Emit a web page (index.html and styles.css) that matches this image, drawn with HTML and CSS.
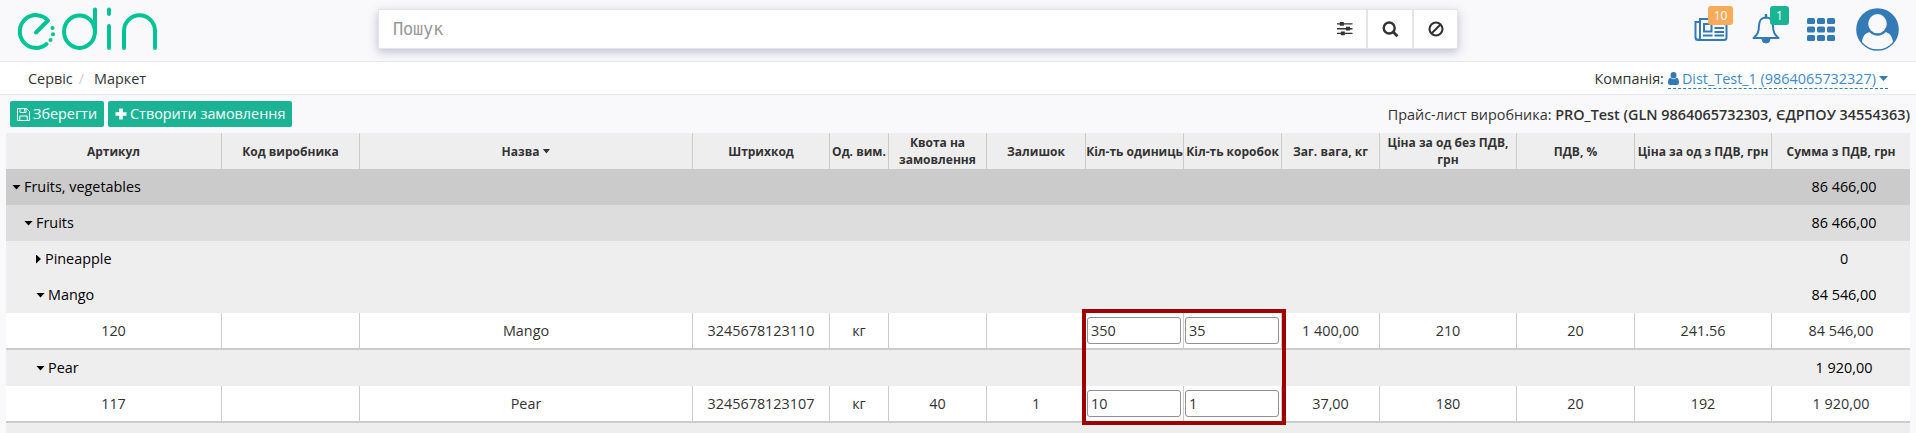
FILE: index.html
```html
<!DOCTYPE html>
<html lang="uk">
<head>
<meta charset="utf-8">
<title>Маркет</title>
<link rel="stylesheet" href="styles.css">
</head>
<body>
<header class="topbar">
  <svg class="logo" width="160" height="52" viewBox="0 0 160 52" role="img" aria-label="edin">
    <g fill="none" stroke="#00c496" stroke-width="4" stroke-linecap="round" stroke-linejoin="round">
      <path d="M35 32.500 47 20.500A16.200 16.400 0 1 0 45.500 44"/>
      <ellipse cx="78.500" cy="31.700" rx="15.400" ry="16.300"/>
      <path d="M94 9.500V32M108 9.500V14M108 26V48M123 48V31a15.500 15.700 0 0 1 31 0V48"/>
    </g>
    <g fill="#00c496"><circle cx="51.500" cy="28" r="2"/><circle cx="52" cy="34.300" r="2"/><circle cx="49.500" cy="40" r="2"/></g>
  </svg>
  <div class="search">
    <div class="search-input">Пошук</div>
    <div class="search-btn filter"><svg width="16" height="14" viewBox="0 0 16 14" fill="#333"><path d="M0 1.2h15.500v1.400H0zM0 6h15.500v1.400H0zM0 10.700h15.500v1.400H0zM2.800 0h4v3.800h-4zM9 4.800h4v3.800H9zM3.800 9.500h4v3.800h-4z"/></svg></div>
    <div class="search-btn"><svg width="17" height="17" viewBox="0 0 17 17" fill="none" stroke="#333" stroke-width="2.400"><circle cx="7.200" cy="7" r="5.500"/><path d="M11.200 11 15.500 15.300" stroke-width="2.800"/></svg></div>
    <div class="search-btn"><svg width="16" height="16" viewBox="0 0 16 16" fill="none" stroke="#333" stroke-width="2.100"><circle cx="8" cy="8" r="6.500"/><path d="M3.500 12.500 12.500 3.500"/></svg></div>
  </div>
  <div class="tools">
    <div class="tool news"><svg width="34" height="24" viewBox="0 0 34 24" fill="none" stroke="#337ab7" stroke-width="2"><path d="M5 4H1.500V19.500a2.500 2.500 0 0 0 2.500 2.500H30a2.500 2.500 0 0 0 2.500-2.500V1H6V19.500a2 2 0 0 1-4 .5"/><path d="M10 6h7.500v7.500H10zM20.500 6H30M20.500 10H30M20.500 14H30M9 17.500h9.500M20.500 17.500H30"/></svg><span class="badge orange">10</span></div>
    <div class="tool bell"><svg width="28" height="30" viewBox="0 0 28 30" fill="none" stroke="#337ab7" stroke-width="2"><path d="M14 3.500c-5 0-7 4-7 8 0 7-2 9.500-5.500 12.500h25c-3.500-3-5.500-5.500-5.500-12.500 0-4-2-8-7-8z" stroke-linejoin="round"/><path d="M14 3.500V1" stroke-width="2.500" stroke-linecap="round"/><path d="M10 25a4 4 0 0 0 8 0z" fill="#337ab7" stroke-width="1"/></svg><span class="badge green">1</span></div>
    <svg class="grid-icon" width="28" height="23" viewBox="0 0 28 23" fill="#337ab7"><rect width="8" height="6" rx="1.500"/><rect x="10" width="8" height="6" rx="1.500"/><rect x="20" width="8" height="6" rx="1.500"/><rect y="8.500" width="8" height="6" rx="1.500"/><rect x="10" y="8.500" width="8" height="6" rx="1.500"/><rect x="20" y="8.500" width="8" height="6" rx="1.500"/><rect y="17" width="8" height="6" rx="1.500"/><rect x="10" y="17" width="8" height="6" rx="1.500"/><rect x="20" y="17" width="8" height="6" rx="1.500"/></svg>
    <svg class="avatar" width="43" height="43" viewBox="0 0 43 43"><circle cx="21.500" cy="21.500" r="21.300" fill="#337ab7"/><path d="M6 34C6.800 28 9.500 25 13.500 24.300a11 11 0 0 0 16 0C33.500 25 36.200 28 37 34a20 20 0 0 1-31 0z" fill="#f9f9fb"/><ellipse cx="21.500" cy="15.700" rx="9.300" ry="9.600" fill="#f9f9fb"/></svg>
  </div>
</header>
<nav class="crumbs">
  <div><span>Сервіс</span><span class="slash">/</span><span>Маркет</span></div>
  <div class="company">Компанія: <a class="company-link"><svg width="11" height="13" viewBox="0 0 11 13" fill="#337ab7"><ellipse cx="5.500" cy="3.300" rx="3" ry="3.300"/><path d="M2.500 5.800C.7 6.300 0 8 0 10.500 0 12 1 13 2.300 13h6.400c1.300 0 2.300-1 2.300-2.500 0-2.500-.7-4.200-2.500-4.700a4 4 0 0 1-6 0z"/></svg><span class="company-name">Dist_Test_1 (9864065732327)</span><i class="caret"></i></a></div>
</nav>
<main>
  <div class="actions">
    <button class="btn"><svg width="13" height="13" viewBox="0 0 13 13" fill="none" stroke="#fff"><path d="M.5.500h9l3 3v9H.5zM3 .5v4h6v-4M2.800 12.500v-4.500h7.400v4.500M7.500 1v2.500"/></svg><span>Зберегти</span></button>
    <button class="btn"><svg width="12" height="12" viewBox="0 0 12 12" fill="#fff"><path d="M4.200.5h3.600v3.700H11.500v3.600H7.800v3.700H4.200V7.800H.5V4.200h3.700z"/></svg><span>Створити замовлення</span></button>
    <div class="pricelist">Прайс-лист виробника: <b>PRO_Test (GLN 9864065732303, ЄДРПОУ 34554363)</b></div>
  </div>
  <div class="sheet">
    <div class="row head"><div>Артикул</div><div>Код виробника</div><div>Назва<i class="caret"></i></div><div>Штрихкод</div><div>Од. вим.</div><div>Квота на замовлення</div><div>Залишок</div><div>Кіл-ть одиниць</div><div>Кіл-ть коробок</div><div>Заг. вага, кг</div><div>Ціна за од без ПДВ, грн</div><div>ПДВ, %</div><div>Ціна за од з ПДВ, грн</div><div>Сумма з ПДВ, грн</div></div>
    <div class="group g1"><i class="caret"></i><span>Fruits, vegetables</span><span class="sum">86 466,00</span></div>
    <div class="group g2"><i class="caret"></i><span>Fruits</span><span class="sum">86 466,00</span></div>
    <div class="group g3"><i class="caret closed"></i><span>Pineapple</span><span class="sum">0</span></div>
    <div class="group g3"><i class="caret"></i><span>Mango</span><span class="sum">84 546,00</span></div>
    <div class="row item"><div>120</div><div></div><div>Mango</div><div>3245678123110</div><div>кг</div><div></div><div></div><div class="edit"><input value="350"></div><div class="edit"><input value="35"></div><div>1 400,00</div><div>210</div><div>20</div><div>241.56</div><div>84 546,00</div></div>
    <div class="group g3"><i class="caret"></i><span>Pear</span><span class="sum">1 920,00</span></div>
    <div class="row item"><div>117</div><div></div><div>Pear</div><div>3245678123107</div><div>кг</div><div>40</div><div>1</div><div class="edit"><input value="10"></div><div class="edit"><input value="1"></div><div>37,00</div><div>180</div><div>20</div><div>192</div><div>1 920,00</div></div>
    <div class="group g3 last"></div>
    <div class="highlight"></div>
  </div>
</main>
</body>
</html>
```

FILE: styles.css
```css
* { box-sizing: border-box; }
body {
  margin: 0;
  background: #f9f9fb;
  color: #333;
  font: 14.4px/20px "Open Sans", "Noto Sans", sans-serif;
}
svg { display: block; flex: none; }
.topbar {
  display: flex;
  align-items: flex-start;
  height: 62px;
  padding-left: 1px;
  border-bottom: 1px solid #e7e7ee;
}
.logo { margin-right: 217px; }
.search {
  display: flex;
  width: 1080px;
  height: 40px;
  margin-top: 9px;
  padding: 1px;
  background: #e5e5e8;
  box-shadow: 0 3px 9px rgba(80, 80, 130, .35);
}
.search-input {
  flex: 1;
  padding: 8px 14px;
  background: #fff;
  color: #999;
  font: 17px/22px "DejaVu Sans Mono", monospace;
  letter-spacing: -.2px;
}
.search-btn {
  display: flex;
  align-items: center;
  justify-content: center;
  width: 44px;
  margin-left: 2px;
  background: #fff;
}
.search-btn:last-child { width: 43px; }
.search-btn.filter { width: 42px; margin-left: 0; }
.tools { display: flex; margin-left: auto; padding-right: 17px; }
.tool { position: relative; }
.news { margin: 18px 24px 0 0; }
.bell { margin: 14px 27px 0 0; }
.badge {
  position: absolute;
  height: 19px;
  border-radius: 3px;
  color: #fff;
  font-size: 12px;
  line-height: 19px;
  text-align: center;
}
.orange { left: 14px; top: -12px; width: 25px; background: #f8ac59; }
.green { left: 18px; top: -8px; width: 19px; background: #1ab394; }
.grid-icon { margin: 18px 21px 0 0; }
.avatar { margin-top: 8px; }
.crumbs {
  display: flex;
  justify-content: space-between;
  height: 33px;
  padding: 7px 28px 0;
  background: #fff;
  border-bottom: 1px solid #e7e7ee;
}
.slash { padding: 0 10px 0 6px; color: #ccc; }
.company { display: flex; gap: 4px; }
.company-link {
  display: flex;
  align-items: center;
  height: 20px;
  border-bottom: 1px dashed #337ab7;
  color: #428bca;
}
.company-name { margin: 0 3px; }
.caret {
  display: inline-block;
  flex: none;
  width: 9px;
  height: 5px;
  background: currentColor;
  clip-path: polygon(0 0, 100% 0, 50% 100%);
}
.company-link .caret { color: #337ab7; }
main { padding: 6px 6px 0; }
.actions { display: flex; gap: 4px; height: 32px; padding-left: 4px; }
.btn {
  display: flex;
  align-items: center;
  gap: 3px;
  height: 26px;
  padding: 0 7px;
  border: 0;
  border-radius: 2px;
  background: #1ab394;
  color: #fff;
  font: inherit;
}
.pricelist { margin-left: auto; padding-top: 4px; }
.pricelist b { font-weight: 600; }
.sheet { position: relative; }
.row {
  display: grid;
  grid-template-columns: 216px 138px 333px 137px 59px 98px 99px 98px 98px 98px 137px 118px 137px 138px;
}
.row > div {
  display: flex;
  align-items: center;
  justify-content: center;
  border-right: 1px solid #ccc;
  text-align: center;
}
.row > div:last-child { border-right: 0; }
.head {
  height: 36px;
  background: #eee;
  font-size: 12px;
  font-weight: 700;
  line-height: 17px;
}
.head > div { white-space: nowrap; }
.head > div:nth-child(6), .head > div:nth-child(11) { white-space: normal; }
.head .caret { width: 8px; margin-left: 3px; }
.item { height: 37px; background: #fff; border-bottom: 2px solid #ccc; }
.row > .edit { justify-content: flex-start; padding-left: 1px; }
.edit input {
  width: 94px;
  height: 27px;
  padding: 0 3px;
  border: 1px solid #8f8f9d;
  border-radius: 3px;
  background: #fff;
  color: #333;
  font: inherit;
}
.group {
  display: flex;
  align-items: center;
  gap: 3px;
  height: 36px;
  background: #eee;
  color: #000;
}
.g1 { padding-left: 6px; background: #cbcbcb; }
.g2 { padding-left: 18px; background: #ddd; }
.g3 { padding-left: 30px; }
.last { height: 10px; }
.group .closed { width: 5px; height: 9px; margin-right: 1px; clip-path: polygon(0 0, 100% 50%, 0 100%); }
.sum { width: 132px; margin-left: auto; text-align: center; }
.highlight {
  position: absolute;
  left: 1076px;
  top: 176px;
  width: 204px;
  height: 116px;
  border: 4px solid #a00000;
}
```
